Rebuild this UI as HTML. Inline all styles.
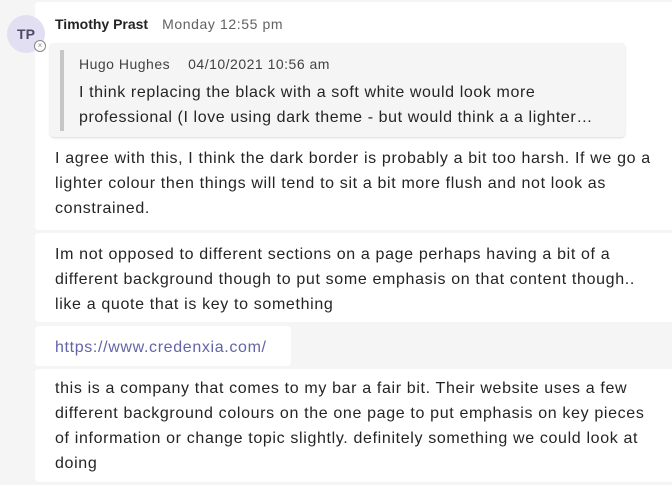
<!DOCTYPE html>
<html><head><style>
body{margin:0;width:672px;height:485px;background:#f5f5f5;font-family:"Liberation Sans",sans-serif;color:#252423;position:relative;overflow:hidden}
.card{position:absolute;left:35px;background:#fff;border-radius:4px}
.t{position:absolute;left:55px;font-size:16px;line-height:25px;letter-spacing:0.65px;white-space:nowrap}
</style></head><body>
<div class="card" style="top:2px;width:650px;height:228px"></div>
<div class="card" style="top:233px;width:650px;height:89px"></div>
<div class="card" style="top:326px;width:256px;height:40px"></div>
<div class="card" style="top:369px;width:650px;height:113px"></div>
<div style="position:absolute;left:7px;top:15px;width:38px;height:38px;border-radius:50%;background:#e1dff1;font-weight:bold;font-size:14px;line-height:38px;text-align:center;color:#4b4a68">TP</div>
<div style="position:absolute;left:34px;top:40px;width:10px;height:10px;border-radius:50%;background:#fff;border:1px solid #8a8886;font-size:8px;line-height:10px;text-align:center;color:#8a8886">×</div>
<div style="position:absolute;left:55px;top:16px;font-size:14px;white-space:nowrap"><b style="color:#252423">Timothy Prast</b><span style="color:#616161;margin-left:14px;letter-spacing:0.6px">Monday 12:55 pm</span></div>
<div style="position:absolute;left:50px;top:43px;width:575px;height:94px;background:#f5f5f5;border-radius:4px;box-shadow:0 1px 2px rgba(0,0,0,.15)"></div>
<div style="position:absolute;left:60px;top:50px;width:4px;height:81px;background:#c8c6c4"></div>
<div style="position:absolute;left:79px;top:56px;font-size:14px;color:#424242;white-space:nowrap;letter-spacing:0.5px">Hugo Hughes<span style="margin-left:18px">04/10/2021 10:56 am</span></div>
<div class="t" style="left:79px;top:80px;letter-spacing:0.6px">I think replacing the black with a soft white would look more<br>professional (I love using dark theme - but would think a a lighter…</div>
<div class="t" style="top:146px">I agree with this, I think the dark border is probably a bit too harsh. If we go a<br>lighter colour then things will tend to sit a bit more flush and not look as<br>constrained.</div>
<div class="t" style="top:242px">Im not opposed to different sections on a page perhaps having a bit of a<br>different background though to put some emphasis on that content though..<br>like a quote that is key to something</div>
<div class="t" style="top:335px;color:#6264a7">https://www.credenxia.com/</div>
<div class="t" style="top:376px">this is a company that comes to my bar a fair bit. Their website uses a few<br>different background colours on the one page to put emphasis on key pieces<br>of information or change topic slightly. definitely something we could look at<br>doing</div>
</body></html>
